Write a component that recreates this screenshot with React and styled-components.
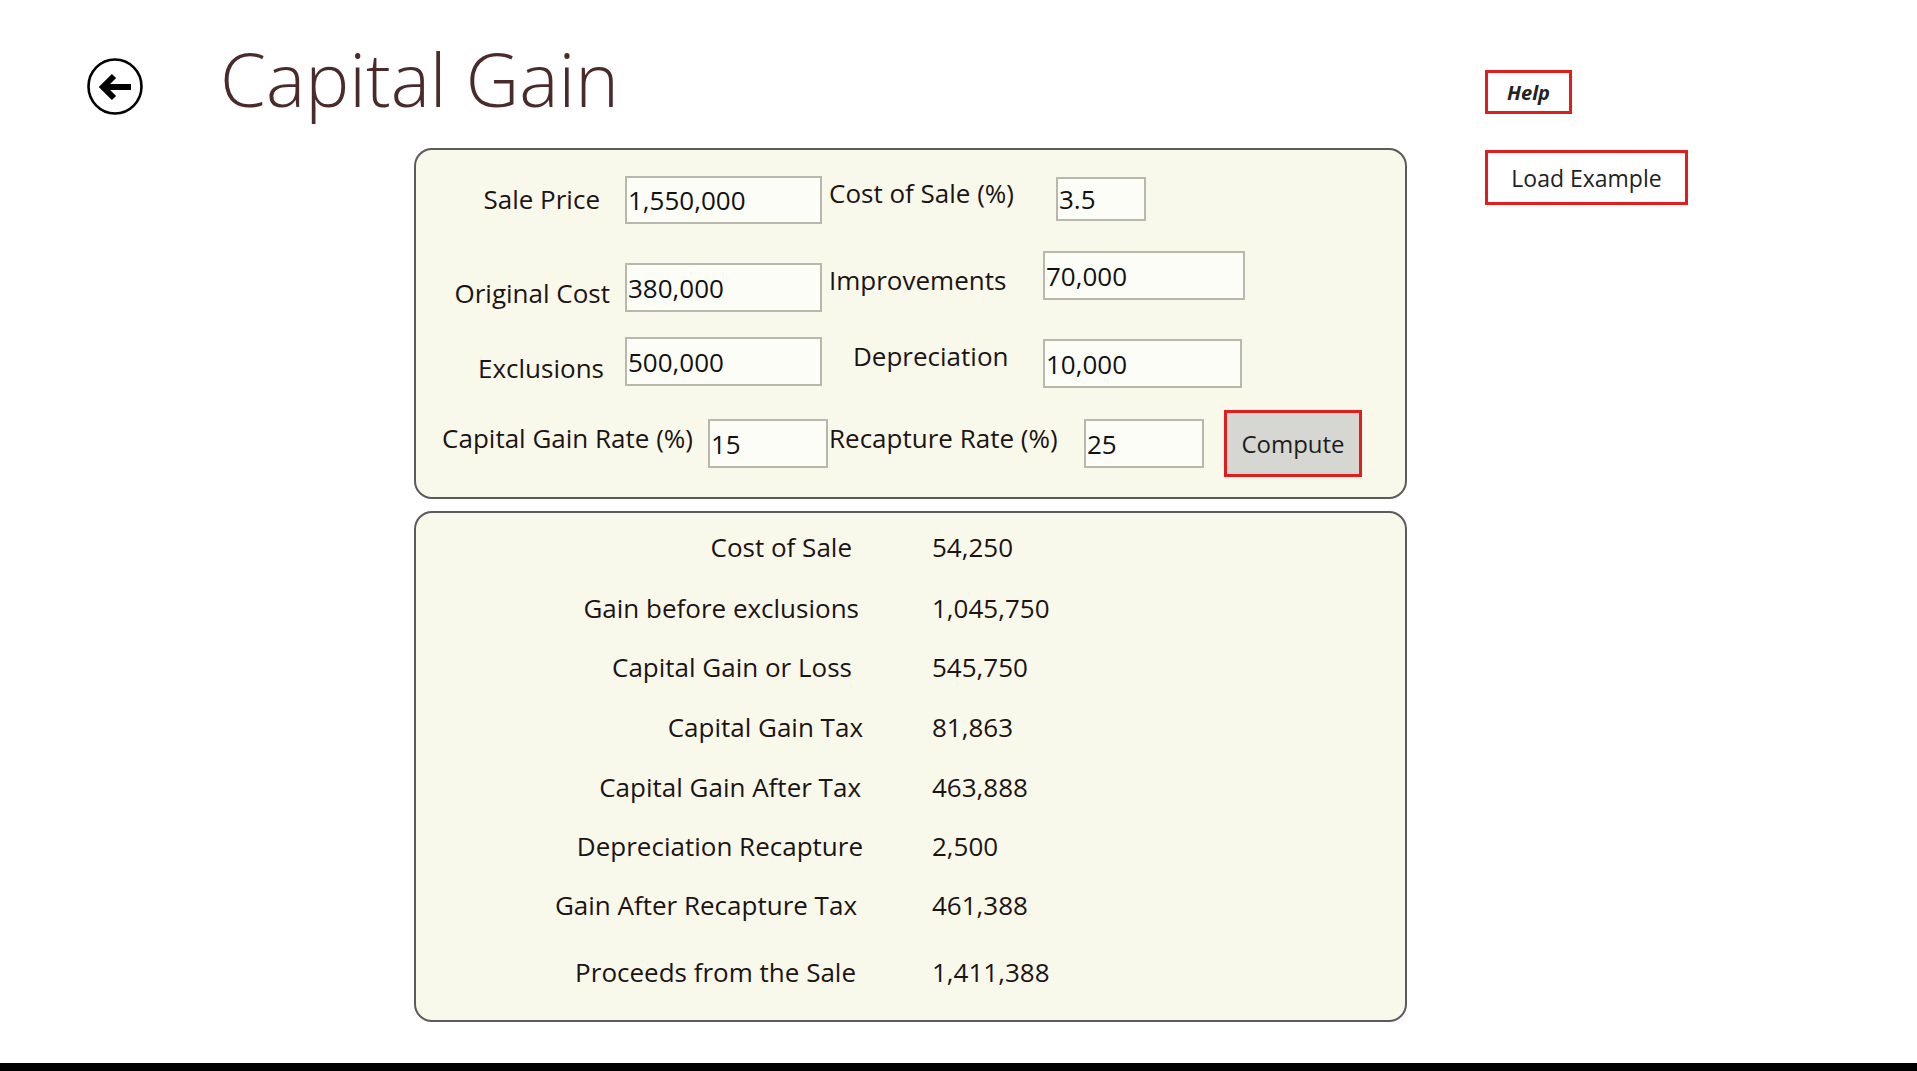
import React from 'react';
import styled, { createGlobalStyle } from 'styled-components';

const GlobalStyle = createGlobalStyle`
  html, body {
    margin: 0;
    padding: 0;
    background: #ffffff;
  }
  body {
    font-family: "Open Sans", "Noto Sans", sans-serif;
    color: #1c1414;
  }
`;

const Page = styled.div`
  display: flex;
  flex-direction: column;
  min-height: 100vh;
`;

const Layout = styled.div`
  display: flex;
  align-items: flex-start;
`;

const Main = styled.div`
  width: 1407px;
  display: flex;
  flex-direction: column;
  flex-shrink: 0;
`;

const Header = styled.header`
  height: 148px;
  display: flex;
  align-items: flex-start;
`;

const BackButton = styled.button`
  width: 56px;
  height: 57px;
  margin: 58px 0 0 87px;
  padding: 0;
  border: none;
  background: none;
  cursor: pointer;
  svg {
    display: block;
  }
`;

const Title = styled.h1`
  margin: 42px 0 0 77px;
  font-size: 74px;
  line-height: 74px;
  font-weight: 300;
  color: #4a2a2a;
  white-space: nowrap;
`;

const Panels = styled.div`
  margin-left: 414px;
  width: 993px;
  display: flex;
  flex-direction: column;
  gap: 12px;
`;

const Panel = styled.section`
  box-sizing: border-box;
  height: ${p => p.$h}px;
  padding-top: ${p => p.$pt}px;
  border: 2px solid #5b5b5b;
  border-radius: 18px;
  background: #f9f9eb;
`;

const Row = styled.div`
  display: flex;
  align-items: flex-start;
  height: ${p => p.$h}px;
`;

const FieldLabel = styled.label`
  box-sizing: border-box;
  flex-shrink: 0;
  width: ${p => p.$w}px;
  margin-left: ${p => p.$ml || 0}px;
  margin-top: ${p => p.$mt}px;
  padding-right: ${p => p.$pr || 0}px;
  text-align: ${p => p.$align || 'right'};
  font-size: 26px;
  line-height: 36px;
  white-space: nowrap;
  color: #1c1414;
`;

const TextBox = styled.input`
  box-sizing: border-box;
  flex-shrink: 0;
  width: ${p => p.$w}px;
  height: ${p => p.$h}px;
  margin-top: ${p => p.$mt}px;
  padding: 0 0 0 1px;
  border: 2px solid #b8b8ac;
  border-radius: 0;
  background: #fdfdf8;
  font-family: inherit;
  font-size: 26px;
  color: #111111;
  outline: none;
`;

const ComputeButton = styled.button`
  box-sizing: border-box;
  flex-shrink: 0;
  width: 138px;
  height: 67px;
  margin: 5px 0 0 20px;
  border: 3px solid #e21d1d;
  background: #d6d6d2;
  font-family: inherit;
  font-size: 24px;
  color: #1e1e1e;
  cursor: pointer;
`;

const ResultRow = styled.div`
  display: grid;
  grid-template-columns: 447px 1fr;
  column-gap: 69px;
  align-items: center;
  height: ${p => p.$h}px;
  font-size: 26px;
  line-height: 36px;
`;

const ResultLabel = styled.span`
  text-align: right;
  padding-right: ${p => p.$pr}px;
  white-space: nowrap;
`;

const ResultValue = styled.span`
  white-space: nowrap;
`;

const Side = styled.aside`
  margin-left: 78px;
  padding-top: 70px;
  display: flex;
  flex-direction: column;
  align-items: flex-start;
  gap: 36px;
`;

const OutlineButton = styled.button`
  box-sizing: border-box;
  width: ${p => p.$w}px;
  height: ${p => p.$h}px;
  padding: 0;
  border: 3px solid #e21d1d;
  background: #ffffff;
  font-family: inherit;
  font-size: ${p => p.$size}px;
  font-style: ${p => (p.$italic ? 'italic' : 'normal')};
  font-weight: ${p => (p.$italic ? 700 : 400)};
  color: #222222;
  cursor: pointer;
`;

const Footer = styled.footer`
  margin-top: auto;
  height: 8px;
  background: #000000;
`;

const BackIcon = () => (
  <svg width="56" height="57" viewBox="0 0 56 57">
    <ellipse cx="28" cy="28.5" rx="26.5" ry="27" fill="none" stroke="#000" strokeWidth="2.6" />
    <path d="M17 29 H44" stroke="#000" strokeWidth="6" fill="none" />
    <path d="M27 18 L16 29 L27 40" stroke="#000" strokeWidth="6" fill="none" strokeLinejoin="miter" />
  </svg>
);

const results = [
  { label: 'Cost of Sale', value: '54,250', h: 63, pr: 11 },
  { label: 'Gain before exclusions', value: '1,045,750', h: 60, pr: 4 },
  { label: 'Capital Gain or Loss', value: '545,750', h: 58, pr: 11 },
  { label: 'Capital Gain Tax', value: '81,863', h: 61, pr: 0 },
  { label: 'Capital Gain After Tax', value: '463,888', h: 59, pr: 2 },
  { label: 'Depreciation Recapture', value: '2,500', h: 59, pr: 0 },
  { label: 'Gain After Recapture Tax', value: '461,388', h: 60, pr: 6 },
  { label: 'Proceeds from the Sale', value: '1,411,388', h: 74, pr: 7 },
];

export default function App() {
  return (
    <Page>
      <GlobalStyle />
      <Layout>
        <Main>
          <Header>
            <BackButton aria-label="Back">
              <BackIcon />
            </BackButton>
            <Title>Capital Gain</Title>
          </Header>
          <Panels>
            <Panel $h={351} $pt={20}>
              <Row $h={70}>
                <FieldLabel $w={209} $pr={25} $mt={11}>Sale Price</FieldLabel>
                <TextBox $w={197} $h={48} $mt={6} defaultValue="1,550,000" />
                <FieldLabel $w={227} $ml={7} $mt={5} $align="left">Cost of Sale (%)</FieldLabel>
                <TextBox $w={90} $h={44} $mt={7} defaultValue="3.5" />
              </Row>
              <Row $h={85}>
                <FieldLabel $w={209} $pr={15} $mt={35}>Original Cost</FieldLabel>
                <TextBox $w={197} $h={49} $mt={23} defaultValue="380,000" />
                <FieldLabel $w={214} $ml={7} $mt={22} $align="left">Improvements</FieldLabel>
                <TextBox $w={202} $h={49} $mt={11} defaultValue="70,000" />
              </Row>
              <Row $h={80}>
                <FieldLabel $w={209} $pr={21} $mt={25}>Exclusions</FieldLabel>
                <TextBox $w={197} $h={49} $mt={12} defaultValue="500,000" />
                <FieldLabel $w={190} $ml={31} $mt={13} $align="left">Depreciation</FieldLabel>
                <TextBox $w={199} $h={49} $mt={14} defaultValue="10,000" />
              </Row>
              <Row $h={80}>
                <FieldLabel $w={292} $pr={15} $mt={15}>Capital Gain Rate (%)</FieldLabel>
                <TextBox $w={120} $h={49} $mt={14} defaultValue="15" />
                <FieldLabel $w={255} $ml={1} $mt={15} $align="left">Recapture Rate (%)</FieldLabel>
                <TextBox $w={120} $h={49} $mt={14} defaultValue="25" />
                <ComputeButton>Compute</ComputeButton>
              </Row>
            </Panel>
            <Panel $h={511} $pt={2}>
              {results.map(r => (
                <ResultRow key={r.label} $h={r.h}>
                  <ResultLabel $pr={r.pr}>{r.label}</ResultLabel>
                  <ResultValue>{r.value}</ResultValue>
                </ResultRow>
              ))}
            </Panel>
          </Panels>
        </Main>
        <Side>
          <OutlineButton $w={87} $h={44} $size={20} $italic>Help</OutlineButton>
          <OutlineButton $w={203} $h={55} $size={23}>Load Example</OutlineButton>
        </Side>
      </Layout>
      <Footer />
    </Page>
  );
}
